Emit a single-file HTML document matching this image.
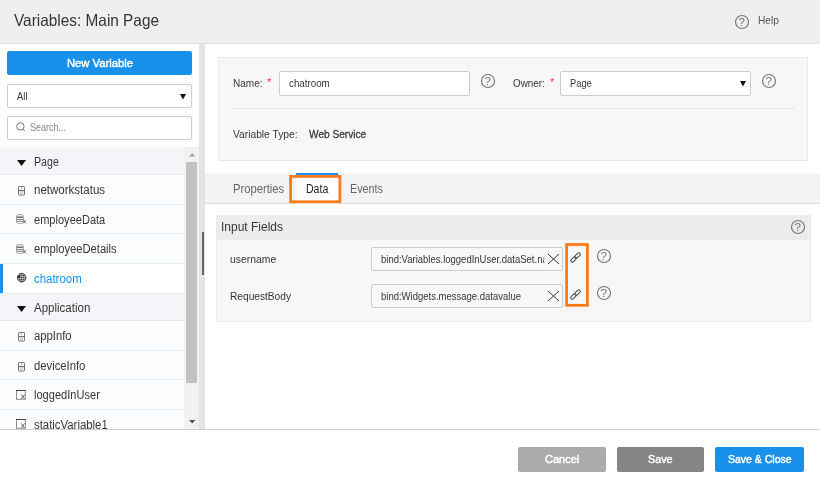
<!DOCTYPE html>
<html><head><meta charset="utf-8"><title>Variables: Main Page</title>
<style>
*{box-sizing:border-box;margin:0;padding:0}
html,body{width:820px;height:489px;overflow:hidden;background:#fff}
body{font-family:"Liberation Sans",sans-serif;color:#363636;position:relative;font-size:12px}
.abs{position:absolute}
.t{position:absolute;white-space:nowrap;line-height:1;transform-origin:0 50%}
.hdr{left:0;top:0;width:820px;height:44px;background:#efefef;border-bottom:1px solid #e0e0e0}
.left{left:0;top:44px;width:199px;height:385px;background:#fff}
.split{left:199px;top:44px;width:6px;height:385px;background:#e4e4e4}
.btn{border-radius:2px;color:#fff;text-align:center}
.box{border:1px solid #ccc;border-radius:2px;background:#fff}
.row{left:0;width:184.4px;border-bottom:1px solid #e3ebf1;background:#fbfcfe}
.grp{left:0;width:184.4px;border-bottom:1px solid #e3e8ee;background:#f4f5f8}
svg{position:absolute;overflow:visible}
#w{position:absolute;left:0;top:0;width:820px;height:489px;will-change:transform}
</style></head><body><div id="w">
<div class="abs hdr"></div>
<div class="t" id="title" style="left:13.70px;top:12px;font-size:16.5px;color:#333;transform:scaleX(0.932)">Variables: Main Page</div>
<svg style="left:735px;top:15px" width="14" height="14" viewBox="0 0 14 14"><circle cx="7" cy="7" r="6.5" fill="none" stroke="#767676" stroke-width="1.15"/><text x="6.700" y="10.800" font-size="11.500" text-anchor="middle" font-family="Liberation Sans, sans-serif" fill="#707070">?</text></svg>
<div class="t" id="help" style="left:758.00px;top:15px;font-size:11.5px;color:#555;transform:scaleX(0.888)">Help</div>

<svg width="0" height="0" style="position:absolute"><defs>
<g id="dev"><rect x=".5" y=".5" width="6" height="8.6" rx=".6" fill="#fff" stroke="#777" stroke-width="1"/><path d="M.5 4.7h6" stroke="#555" stroke-width="1" fill="none"/><path d="M3.5 1.3v2.2M2 6.2h1M4 6.2h1M2 7.8h3" stroke="#999" stroke-width=".8" fill="none"/></g>
<g id="db"><path d="M.5 1.600v6.700c0 .7 1.500 1.200 3.400 1.200s3.400-.5 3.400-1.200V1.600" fill="#fff" stroke="#999" stroke-width=".9"/><ellipse cx="3.900" cy="1.600" rx="3.400" ry="1.100" fill="#f2f2f2" stroke="#999" stroke-width=".9"/><path d="M.9 3.500h6M.9 5.400h6M1.100 7.300h5.600" fill="none" stroke="#666" stroke-width=".9"/><path d="M7.300 5.900l2.400 3.400M9.700 5.900L7.300 9.300" stroke="#555" stroke-width=".9" fill="none"/></g>
<g id="globe"><circle cx="4.700" cy="4.700" r="4.250" fill="#fff" stroke="#2a2a2a" stroke-width=".9"/><path d="M.5 4.700h8.400M1.200 2.700h7M1.200 6.700h7" stroke="#2a2a2a" stroke-width=".75" fill="none"/><path d="M4.700.5v8.400" stroke="#2a2a2a" stroke-width=".6" fill="none"/><ellipse cx="4.700" cy="4.700" rx="2.100" ry="4.200" fill="none" stroke="#2a2a2a" stroke-width=".6"/><path d="M.9 4.400V3.300L2 2.700h1v1.700z" fill="#111"/></g>
<g id="sq"><rect x=".5" y=".5" width="8.800" height="8.800" fill="#fff" stroke="#8a8a8a" stroke-width="1"/><path d="M0 .5h9.800" stroke="#444" stroke-width="1"/><path d="M5.200 4.400l3.200 4.400M8.600 4.400L5.200 8.800" stroke="#555" stroke-width=".9" fill="none"/></g>
</defs></svg>

<!-- left panel -->
<div class="abs left"></div>
<div class="abs btn" style="left:7px;top:51px;width:185px;height:24px;background:#1991eb"></div>
<div class="t" id="newvar" style="left:66.50px;top:58px;font-size:11.5px;-webkit-text-stroke:.45px #fff;color:#fff;transform:scaleX(0.977)">New Variable</div>
<div class="abs box" style="left:7px;top:84px;width:185px;height:24px"></div>
<div class="t" id="all" style="left:16.50px;top:91px;font-size:10.5px;transform:scaleX(0.900)">All</div>
<svg style="left:180px;top:94px" width="6" height="6" viewBox="0 0 6 6"><path d="M0 0h6L3 5.6z" fill="#111"/></svg>
<div class="abs box" style="left:7px;top:115.5px;width:185px;height:24px"></div>
<svg style="left:16px;top:122px" width="10" height="10" viewBox="0 0 10 10"><circle cx="4.4" cy="4.4" r="3.7" fill="none" stroke="#777" stroke-width="1"/><path d="M7 7.2l1.8 1.8" stroke="#777" stroke-width="1" fill="none"/></svg>
<div class="t" id="search" style="left:30.00px;top:122.5px;font-size:10px;color:#888;transform:scaleX(0.899)">Search...</div>

<div class="abs" style="left:0;top:146.5px;width:199px;height:1px;background:#e3e3e3"></div>
<div class="abs" style="left:184.4px;top:147px;width:14.8px;height:282px;background:#f1f1f1"></div>
<div class="abs" style="left:186px;top:162px;width:11.2px;height:221px;background:#c1c1c1"></div>
<svg style="left:188.5px;top:153px" width="6.4" height="3.6" viewBox="0 0 7 4"><path d="M0 4h7L3.5 0z" fill="#a3a3a3"/></svg>
<svg style="left:188.7px;top:419.5px" width="6.4" height="3.6" viewBox="0 0 7 4"><path d="M0 0h7L3.5 4z" fill="#505050"/></svg>

<div class="abs grp" style="top:147px;height:28px"></div>
<div class="abs row" style="top:175px;height:30px"></div>
<div class="abs row" style="top:205px;height:29px"></div>
<div class="abs row" style="top:234px;height:30px"></div>
<div class="abs row" style="top:264px;height:30px;background:#fff"></div>
<div class="abs" style="left:0;top:264px;width:2.6px;height:29.4px;background:#1991eb"></div>
<div class="abs grp" style="top:294px;height:27px"></div>
<div class="abs row" style="top:321px;height:30px"></div>
<div class="abs row" style="top:351px;height:29px"></div>
<div class="abs row" style="top:380px;height:30px"></div>
<div class="abs row" style="top:410px;height:19px;border-bottom:0"></div>

<svg style="left:17px;top:159.5px" width="9" height="6" viewBox="0 0 9 6"><path d="M0 0h9L4.5 6z" fill="#111"/></svg>
<svg style="left:17px;top:305.5px" width="9" height="6" viewBox="0 0 9 6"><path d="M0 0h9L4.5 6z" fill="#111"/></svg>
<div class="t li" id="l0" style="left:33.70px;top:155.5px;transform:scaleX(0.888)">Page</div>
<div class="t li" id="l1" style="left:33.70px;top:184.0px;transform:scaleX(0.960)">networkstatus</div>
<div class="t li" id="l2" style="left:33.70px;top:213.5px;transform:scaleX(0.921)">employeeData</div>
<div class="t li" id="l3" style="left:33.70px;top:243.0px;transform:scaleX(0.932)">employeeDetails</div>
<div class="t li" id="l4" style="left:33.70px;top:272.5px;color:#1991eb;transform:scaleX(0.953)">chatroom</div>
<div class="t li" id="l5" style="left:33.70px;top:301.5px;transform:scaleX(0.959)">Application</div>
<div class="t li" id="l6" style="left:33.70px;top:330.0px;transform:scaleX(0.938)">appInfo</div>
<div class="t li" id="l7" style="left:33.70px;top:359.5px;transform:scaleX(0.938)">deviceInfo</div>
<div class="t li" id="l8" style="left:33.70px;top:389.0px;transform:scaleX(0.922)">loggedInUser</div>
<div class="t li" id="l9" style="left:33.70px;top:418.5px;transform:scaleX(0.948)">staticVariable1</div>


<svg style="left:18.100px;top:186px" width="7" height="10"><use href="#dev"/></svg>
<svg style="left:16.100px;top:214.100px" width="10" height="10"><use href="#db"/></svg>
<svg style="left:16.100px;top:243.600px" width="10" height="10"><use href="#db"/></svg>
<svg style="left:16.500px;top:273.300px" width="10" height="10"><use href="#globe"/></svg>
<svg style="left:18.100px;top:332px" width="7" height="10"><use href="#dev"/></svg>
<svg style="left:18.100px;top:361.500px" width="7" height="10"><use href="#dev"/></svg>
<svg style="left:16.100px;top:389.900px" width="10" height="10"><use href="#sq"/></svg>
<svg style="left:16.100px;top:419.400px" width="10" height="10"><use href="#sq"/></svg>
<div class="abs split"></div>
<div class="abs" style="left:202px;top:232px;width:1.5px;height:43px;background:#666"></div>

<!-- right -->
<div class="abs" style="left:218px;top:57px;width:590px;height:104px;background:#f7f7f7;border:1px solid #e9e9e9"></div>
<div class="t" id="name" style="left:232.50px;top:77.5px;font-size:11px;transform:scaleX(0.910)">Name:</div>
<div class="t" style="left:267px;top:77px;font-size:11px;color:#f33">*</div>
<div class="abs box" style="left:279px;top:71px;width:191px;height:25px"></div>
<div class="t" id="chat" style="left:288.75px;top:78.5px;font-size:10px;transform:scaleX(0.978)">chatroom</div>
<svg style="left:481.4px;top:73.8px" width="14" height="14" viewBox="0 0 14 14"><circle cx="7" cy="7" r="6.5" fill="none" stroke="#767676" stroke-width="1.15"/><text x="6.700" y="10.800" font-size="11.500" text-anchor="middle" font-family="Liberation Sans, sans-serif" fill="#707070">?</text></svg>
<div class="t" id="owner" style="left:513.25px;top:77.5px;font-size:11px;transform:scaleX(0.895)">Owner:</div>
<div class="t" style="left:550px;top:77px;font-size:11px;color:#f33">*</div>
<div class="abs box" style="left:560px;top:71px;width:191px;height:25px"></div>
<div class="t" id="pagesel" style="left:569.50px;top:78.5px;font-size:10px;transform:scaleX(0.931)">Page</div>
<svg style="left:740px;top:80.6px" width="6" height="6" viewBox="0 0 6 6"><path d="M0 0h6L3 5.6z" fill="#111"/></svg>
<svg style="left:762px;top:74px" width="14" height="14" viewBox="0 0 14 14"><circle cx="7" cy="7" r="6.5" fill="none" stroke="#767676" stroke-width="1.15"/><text x="6.700" y="10.800" font-size="11.500" text-anchor="middle" font-family="Liberation Sans, sans-serif" fill="#707070">?</text></svg>
<div class="abs" style="left:232.5px;top:107.5px;width:561px;height:1.5px;background:#e3e3e3"></div>
<div class="t" id="vtype" style="left:232.50px;top:129px;font-size:11px;transform:scaleX(0.931)">Variable Type:</div>
<div class="t" id="websvc" style="left:308.75px;top:129px;font-size:11px;-webkit-text-stroke:.3px #3a3a3a;color:#3a3a3a;transform:scaleX(0.921)">Web Service</div>

<!-- tabs -->
<div class="abs" style="left:205px;top:174px;width:615px;height:30px;background:#f2f3f5;border-bottom:1px solid #dcdcdc"></div>
<div class="abs" style="left:296px;top:173px;width:42px;height:31px;background:#fff;border-top:2.5px solid #1991eb"></div>

<div class="t" id="tab1" style="left:232.50px;top:183px;font-size:12px;color:#666;transform:scaleX(0.937)">Properties</div>
<div class="t" id="tab2" style="left:305.50px;top:183px;font-size:12px;color:#222;transform:scaleX(0.877)">Data</div>
<div class="t" id="tab3" style="left:349.50px;top:183px;font-size:12px;color:#666;transform:scaleX(0.899)">Events</div>

<!-- input fields -->
<div class="abs" style="left:216px;top:214.5px;width:594.5px;height:107px;background:#f7f7f7;border:1px solid #ececec"></div>
<div class="abs" style="left:216px;top:214.5px;width:594.5px;height:25px;background:#ececec"></div>
<div class="t" id="inpf" style="left:221.00px;top:219.5px;font-size:13px;transform:scaleX(0.923)">Input Fields</div>
<svg style="left:791px;top:220.2px" width="14" height="14" viewBox="0 0 14 14"><circle cx="7" cy="7" r="6.5" fill="none" stroke="#767676" stroke-width="1.15"/><text x="6.700" y="10.800" font-size="11.500" text-anchor="middle" font-family="Liberation Sans, sans-serif" fill="#707070">?</text></svg>
<div class="t" id="user" style="left:229.50px;top:253.5px;font-size:11.5px;transform:scaleX(0.904)">username</div>
<div class="t" id="req" style="left:229.50px;top:290.5px;font-size:11.5px;transform:scaleX(0.883)">RequestBody</div>
<div class="abs box" style="left:371px;top:247px;width:191.5px;height:24px;background:#f8f8f8"></div>
<div class="abs box" style="left:371px;top:284px;width:191.5px;height:24px;background:#f8f8f8"></div>
<div class="t" id="b1" style="left:381.25px;top:254.5px;font-size:10px;width:171.8px;overflow:hidden;transform:scaleX(0.95)">bind:Variables.loggedInUser.dataSet.name</div>
<div class="t" id="b2" style="left:381.25px;top:291.5px;font-size:10px;transform:scaleX(0.950)">bind:Widgets.message.datavalue</div>
<svg style="left:547.7px;top:253.6px" width="11" height="10" viewBox="0 0 11 10"><path d="M0 0L11 10M11 0L0 10" stroke="#333" stroke-width="1" fill="none"/></svg>
<svg style="left:547.7px;top:290.9px" width="11" height="10" viewBox="0 0 11 10"><path d="M0 0L11 10M11 0L0 10" stroke="#333" stroke-width="1" fill="none"/></svg>

<svg id="lk" style="left:570px;top:251.5px" width="11" height="11" viewBox="0 0 11 11"><g fill="none" stroke="#4a4a4a" stroke-width="1.05" transform="rotate(-44 5.5 5.5)"><rect x="-0.6" y="4.05" width="6.5" height="2.9" rx="1.45"/><rect x="5.1" y="4.05" width="6.5" height="2.9" rx="1.45"/></g></svg>
<svg style="left:570px;top:288.5px" width="11" height="11" viewBox="0 0 11 11"><g fill="none" stroke="#4a4a4a" stroke-width="1.05" transform="rotate(-44 5.5 5.5)"><rect x="-0.6" y="4.05" width="6.5" height="2.9" rx="1.45"/><rect x="5.1" y="4.05" width="6.5" height="2.9" rx="1.45"/></g></svg>
<svg style="left:596.7px;top:248.8px" width="14" height="14" viewBox="0 0 14 14"><circle cx="7" cy="7" r="6.5" fill="none" stroke="#767676" stroke-width="1.15"/><text x="6.700" y="10.800" font-size="11.500" text-anchor="middle" font-family="Liberation Sans, sans-serif" fill="#707070">?</text></svg>
<svg style="left:596.7px;top:285.9px" width="14" height="14" viewBox="0 0 14 14"><circle cx="7" cy="7" r="6.5" fill="none" stroke="#767676" stroke-width="1.15"/><text x="6.700" y="10.800" font-size="11.500" text-anchor="middle" font-family="Liberation Sans, sans-serif" fill="#707070">?</text></svg>

<svg style="left:0;top:0" width="820" height="489"><rect x="290.6" y="176.4" width="49.3" height="25.4" fill="none" stroke="#fc7a1c" stroke-width="2.8"/><rect x="566.6" y="244.5" width="20.8" height="60.8" fill="none" stroke="#fc7a1c" stroke-width="2.8"/></svg>
<!-- footer -->
<div class="abs" style="left:0;top:429px;width:820px;height:60px;background:#fff;border-top:1px solid #cfcfcf"></div>
<div class="abs btn" style="left:518px;top:447px;width:87.5px;height:24.5px;background:#ababab"></div>
<div class="abs btn" style="left:616.5px;top:447px;width:87px;height:24.5px;background:#858585"></div>
<div class="abs btn" style="left:714.5px;top:447px;width:89px;height:24.5px;background:#1991eb"></div>
<div class="t" id="f1" style="left:544.50px;top:453.5px;font-size:11.5px;-webkit-text-stroke:.45px #fff;color:#fff;transform:scaleX(0.958)">Cancel</div>
<div class="t" id="f2" style="left:647.50px;top:453.5px;font-size:11.5px;-webkit-text-stroke:.45px #fff;color:#fff;transform:scaleX(0.938)">Save</div>
<div class="t" id="f3" style="left:727.50px;top:453.5px;font-size:11.5px;-webkit-text-stroke:.45px #fff;color:#fff;transform:scaleX(0.913)">Save &amp; Close</div>
</div></body></html>
